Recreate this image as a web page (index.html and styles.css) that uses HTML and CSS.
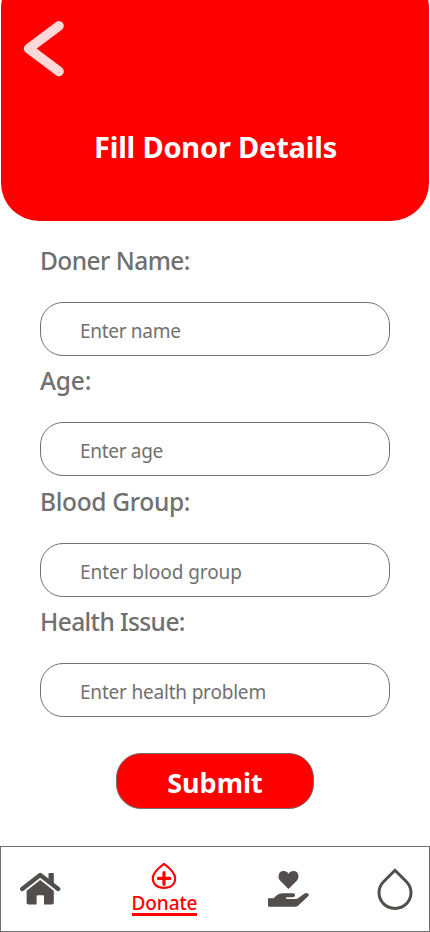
FILE: index.html
```html
<!DOCTYPE html>
<html lang="en">
<head>
<meta charset="utf-8">
<title>Fill Donor Details</title>
<link rel="stylesheet" href="styles.css">
</head>
<body>
<div class="screen">
  <header class="header">
    <a class="back" href="#" aria-label="Back">
      <svg width="42" height="56" viewBox="0 0 42 56"><path d="M36 4.900 5.600 27.600 36 50.400" fill="none" stroke="#ffd9d9" stroke-width="9.600" stroke-linecap="round" stroke-linejoin="round"/></svg>
    </a>
    <h1 class="title">Fill Donor Details</h1>
  </header>
  <form class="form">
    <div class="field"><label class="label name-label" for="name">Doner Name:</label><input class="input name-input" id="name" placeholder="Enter name"></div>
    <div class="field"><label class="label age-label" for="age">Age:</label><input class="input age-input" id="age" placeholder="Enter age"></div>
    <div class="field"><label class="label blood-label" for="blood">Blood Group:</label><input class="input blood-input" id="blood" placeholder="Enter blood group"></div>
    <div class="field"><label class="label health-label" for="health">Health Issue:</label><input class="input health-input" id="health" placeholder="Enter health problem"></div>
    <button class="submit" type="button">Submit</button>
  </form>
  <nav class="nav">
    <a class="home" href="#" aria-label="Home">
      <svg width="42" height="35" viewBox="0 0 42 35"><path d="M3.200 18 21.200 4 39.200 18" fill="none" stroke="#524e4d" stroke-width="4.300" stroke-linecap="round" stroke-linejoin="round"/><path d="M29.500 2.800q0-.8.800-.8H34q.8 0 .8.800V15l-5.300-4z" fill="#524e4d"/><path d="M7.600 19.700 21.200 9l13.600 10.700v12.100q0 1.800-1.800 1.800h-8v-8.400q0-1-1-1h-5.400q-1 0-1 1v8.400H9.400q-1.800 0-1.800-1.800z" fill="#524e4d"/></svg>
    </a>
    <a class="donate" href="#">
      <svg class="donate-icon" width="26" height="28" viewBox="0 0 26 28"><path d="M13 1.800C9.700 4.200 1.800 10.700 1.800 16.300 1.800 22.500 6.400 25.900 13 25.900s11.200-3.400 11.200-9.600C24.200 10.700 16.300 4.200 13 1.800z" fill="none" stroke="red" stroke-width="2.100" stroke-linejoin="round"/><path d="M13 10.500v11.800M7.400 16.400h11.400" stroke="red" stroke-width="3.200" stroke-linecap="round"/></svg>
      <span class="donate-text">Donate</span>
    </a>
    <a class="care" href="#" aria-label="Care">
      <svg width="41" height="37" viewBox="0 0 41 37"><path d="M20.500 19 12 10.500C9.300 7.500 10.200 1 15.400 1c2.600 0 4 1 5.100 2.700C21.600 2 23 1 25.600 1c5.200 0 6.100 6.500 3.400 9.500z" fill="#524e4d"/><path d="M0 28.200h5.500l3.600-3.100q2.500-1.900 5.200-1.900h10.800q2 0 2 1.900t-2 2.100h-6.300q-.8 0-.8.800t.8.900h9.200q1.100 0 2-.7l6.500-4.600q1.900-1.400 3.500 0 1.600 1.500-.1 3L30 35.700q-1.200 1-2.900 1H1.200Q0 36.700 0 35.500z" fill="#524e4d"/></svg>
    </a>
    <a class="drop" href="#" aria-label="Blood">
      <svg width="36" height="42" viewBox="0 0 36 42"><path d="M18 2.200 7 13.300C4 16.300 2 20.200 2 24.600c0 9.200 7.200 15.800 16 15.800s16-6.600 16-15.800c0-4.400-2-8.300-5-11.300z" fill="none" stroke="#524e4d" stroke-width="3" stroke-linejoin="round"/></svg>
    </a>
  </nav>
</div>
</body>
</html>
```
FILE: styles.css
```css
* { box-sizing: border-box; }
body { margin: 0; background: #fff; font-family: "Noto Sans", "Open Sans", sans-serif; }
.screen { width: 430px; height: 932px; overflow: hidden; display: flex; flex-direction: column; }
.header { flex: none; height: 251px; margin: -30px 1px 0; padding: 51px 0 0 22px; background: red; border-radius: 38px; }
.back { display: block; height: 56px; }
.back svg, .nav svg { display: block; }
.title { margin: 50px 0 0 -22px; padding-left: 1px; text-align: center; color: #fff; font-size: 29px; line-height: 40px; font-weight: 700; letter-spacing: -0.2px; }
.form { flex: none; height: 625px; padding: 19px 40px 0; display: flex; flex-direction: column; }
.field { flex: none; height: 120.35px; }
.label { display: block; height: 62px; line-height: 42px; color: #707070; font-size: 24.5px; font-weight: 500; white-space: nowrap; }
.name-label { letter-spacing: -0.55px; }
.age-label { letter-spacing: -0.2px; }
.blood-label { letter-spacing: -0.32px; }
.health-label { letter-spacing: -0.6px; }
.input { display: block; width: 350px; height: 54px; padding: 4px 39px 0; border: 1px solid #707070; border-radius: 23px; background: #fff; font: 400 19px "Noto Sans", "Open Sans", sans-serif; outline: none; }
.input::placeholder { color: #707070; opacity: 1; }
.name-input, .age-input { letter-spacing: -0.3px; }
.blood-input { letter-spacing: -0.06px; }
.health-input { letter-spacing: -0.2px; }
.submit { align-self: center; flex: none; width: 198px; height: 56px; margin-top: 32px; padding: 3px 0 0; border: 1px solid #707070; border-radius: 25px; background: red; color: #fff; font: 700 27px "Noto Sans", "Open Sans", sans-serif; }
.nav { flex: none; height: 86px; border: 1px solid #707070; display: flex; align-items: flex-start; }
.nav a { text-decoration: none; }
.home { margin: 24px 0 0 18px; }
.donate { width: 65px; margin: 15px 0 0 71px; display: flex; flex-direction: column; align-items: center; color: red; }
.donate-icon { margin-right: 1px; }
.donate-text { width: 65px; height: 26px; border-bottom: 3px solid red; display: flex; justify-content: center; font-size: 19px; line-height: 26px; font-weight: 500; letter-spacing: -0.1px; }
.care { margin: 23px 0 0 71px; }
.drop { margin: 21px 0 0 68px; }
```
